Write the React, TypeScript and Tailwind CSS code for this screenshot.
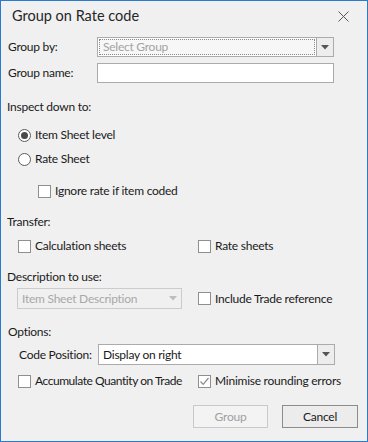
import React from "react";

function Check({ checked = false, label, className = "" }: { checked?: boolean; label: string; className?: string }) {
  return (
    <div className={`flex items-center h-4 shrink-0 ${className}`}>
      <span className="w-[13px] h-[13px] border border-[#8f8f8f] bg-white flex items-center justify-center shrink-0">
        {checked && (
          <svg width="11" height="11" viewBox="0 0 11 11">
            <path d="M1.5 5.5 L4.2 8.3 L9.5 2" fill="none" stroke="#8a8a8a" strokeWidth="1.2" />
          </svg>
        )}
      </span>
      <span className="ml-[4px] whitespace-nowrap">{label}</span>
    </div>
  );
}

function Radio({ checked = false, label }: { checked?: boolean; label: string }) {
  return (
    <div className="flex items-center h-4 ml-[17px]">
      <span className="w-[13px] h-[13px] rounded-full border border-[#5c5c5c] bg-white flex items-center justify-center shrink-0">
        {checked && <span className="w-[7px] h-[7px] rounded-full bg-[#4a4a4a]" />}
      </span>
      <span className="ml-[4px] whitespace-nowrap">{label}</span>
    </div>
  );
}

function Arrow({ color }: { color: string }) {
  return (
    <svg width="8" height="5" viewBox="0 0 8 5">
      <path d="M0 0 H8 L4 4.5 Z" fill={color} />
    </svg>
  );
}

export default function App() {
  return (
    <div
      className="w-[368px] h-[442px] border border-[#2a7ad0] bg-[#f0f0f0] text-[12px] tracking-[-0.25px] text-[#1a1a1a] flex flex-col"
      style={{ fontFamily: '"Segoe UI", Lato, sans-serif' }}
    >
      {/* title bar */}
      <div className="h-[30px] shrink-0 flex items-center justify-between pl-[11px] pr-[18px]">
        <span className="text-[14.5px] tracking-normal text-[#262626]">Group on Rate code</span>
        <svg width="11" height="11" viewBox="0 0 11 11">
          <path d="M0.5 0.5 L10.5 10.5 M10.5 0.5 L0.5 10.5" stroke="#555" strokeWidth="1" />
        </svg>
      </div>

      {/* group by */}
      <div className="flex items-center mt-[6px] pl-[7px]">
        <span className="w-[89px] whitespace-nowrap">Group by:</span>
        <div className="w-[237px] h-[20px] border border-[#ababab] bg-white flex">
          <div className="flex-1 m-[1px] border border-dotted border-[#8a8a8a] bg-[#f7f7f7] flex items-center pl-[3px] text-[#a3a3a3]">
            Select Group
          </div>
          <div className="w-[17px] border-l border-[#ababab] bg-[#ededed] flex items-center justify-center">
            <Arrow color="#555" />
          </div>
        </div>
      </div>

      {/* group name */}
      <div className="flex items-center mt-[6px] pl-[7px]">
        <span className="w-[89px] whitespace-nowrap">Group name:</span>
        <div className="w-[237px] h-[20px] border border-[#ababab] bg-white" />
      </div>

      <div className="h-4 flex items-center mt-[16px] pl-[6px]">Inspect down to:</div>
      <div className="mt-[12px]">
        <Radio checked label="Item Sheet level" />
      </div>
      <div className="mt-[8px]">
        <Radio label="Rate Sheet" />
      </div>
      <div className="mt-[16px] pl-[37px]">
        <Check label="Ignore rate if item coded" />
      </div>

      <div className="h-4 flex items-center mt-[15px] pl-[6px]">Transfer:</div>
      <div className="flex mt-[8px] pl-[17px]">
        <Check label="Calculation sheets" className="w-[180px]" />
        <Check label="Rate sheets" />
      </div>

      <div className="h-4 flex items-center mt-[15px] pl-[6px]">Description to use:</div>
      <div className="flex items-center mt-[3px] pl-[16px]">
        <div className="w-[165px] h-[21px] border border-[#cccccc] bg-[#f0f0f0] flex">
          <div className="flex-1 flex items-center pl-[4px] text-[#a8a8a8] whitespace-nowrap">Item Sheet Description</div>
          <div className="w-[17px] flex items-center justify-center">
            <Arrow color="#bdbdbd" />
          </div>
        </div>
        <Check label="Include Trade reference" className="ml-[16px]" />
      </div>

      <div className="h-4 flex items-center mt-[15px] pl-[7px]">Options:</div>
      <div className="flex items-center mt-[4px] pl-[18px]">
        <span className="w-[79px] whitespace-nowrap">Code Position:</span>
        <div className="w-[237px] h-[21px] border border-[#ababab] bg-white flex">
          <div className="flex-1 flex items-center pl-[4px]">Display on right</div>
          <div className="w-[17px] border-l border-[#ababab] bg-[#ededed] flex items-center justify-center">
            <Arrow color="#555" />
          </div>
        </div>
      </div>
      <div className="flex mt-[8px] pl-[17px]">
        <Check label="Accumulate Quantity on Trade" className="w-[180px] tracking-[-0.45px]" />
        <Check checked label="Minimise rounding errors" />
      </div>

      {/* buttons */}
      <div className="flex justify-end gap-[14px] mt-[16px] pr-[9px]">
        <div className="w-[75px] h-[23px] border border-[#c9c9c9] bg-[#f3f3f3] flex items-center justify-center text-[#a0a0a0]">
          Group
        </div>
        <div className="w-[76px] h-[23px] border border-[#8c8c8c] bg-[#ececec] flex items-center justify-center">
          Cancel
        </div>
      </div>
    </div>
  );
}
